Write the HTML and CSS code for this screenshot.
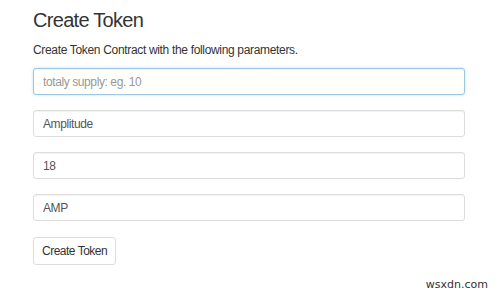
FILE: index.html
```html
<!DOCTYPE html>
<html lang="en">
<head>
  <meta charset="UTF-8" />
  <title>Create Token</title>
  <link rel="stylesheet" href="styles.css">
</head>
<body>
  <div class="container">
    <h1>Create Token</h1>
    <p class="lead">Create Token Contract with the following parameters.</p>

    <form class="token-form">
      <input class="form-control focus" type="text" placeholder="totaly supply: eg. 10">
      <input class="form-control" type="text" value="Amplitude">
      <input class="form-control" type="text" value="18">
      <input class="form-control" type="text" value="AMP">
      <button class="btn" type="button">Create Token</button>
    </form>
  </div>

  <div class="watermark">wsxdn.com</div>
</body>
</html>
```

FILE: styles.css
```css
body {
  font-family: "Liberation Sans", Arial, sans-serif;
  margin: 0;
  background: #fff;
  color: #333;
  width: 500px;
  height: 298px;
  overflow: hidden;
  position: relative;
}
.container {
  padding: 8px 35px 0 33px;
}
h1 {
  font-size: 20px;
  font-weight: normal;
  letter-spacing: -0.7px;
  margin: 0;
  line-height: 24px;
}
.lead {
  font-size: 12px;
  letter-spacing: -0.33px;
  margin: 11px 0 0;
  line-height: 14px;
}
.token-form {
  display: flex;
  flex-direction: column;
  align-items: flex-start;
  gap: 15px;
  margin-top: 11px;
}
.form-control {
  box-sizing: border-box;
  width: 100%;
  height: 27px;
  padding: 0 9px;
  font-family: inherit;
  font-size: 12px;
  letter-spacing: -0.4px;
  color: #555;
  border: 1px solid #ddd;
  border-radius: 3px;
  background: #fff;
  box-shadow: inset 0 1px 1px rgba(0, 0, 0, 0.05);
  outline: none;
}
.form-control::placeholder {
  color: #999;
}
.form-control.focus {
  border-color: #9cc8e6;
  background: #fffffc;
  box-shadow: inset 0 1px 1px rgba(0, 0, 0, 0.05), 0 0 3px rgba(102, 175, 233, 0.4);
}
.btn {
  height: 28px;
  margin-top: 1px;
  padding: 0 8px;
  font-family: inherit;
  font-size: 12px;
  letter-spacing: -0.5px;
  color: #333;
  background: #fff;
  border: 1px solid #ddd;
  border-radius: 3px;
}
.watermark {
  position: absolute;
  right: 12px;
  bottom: 7px;
  font-family: "DejaVu Sans", sans-serif;
  font-size: 11px;
  color: #333;
}
```
